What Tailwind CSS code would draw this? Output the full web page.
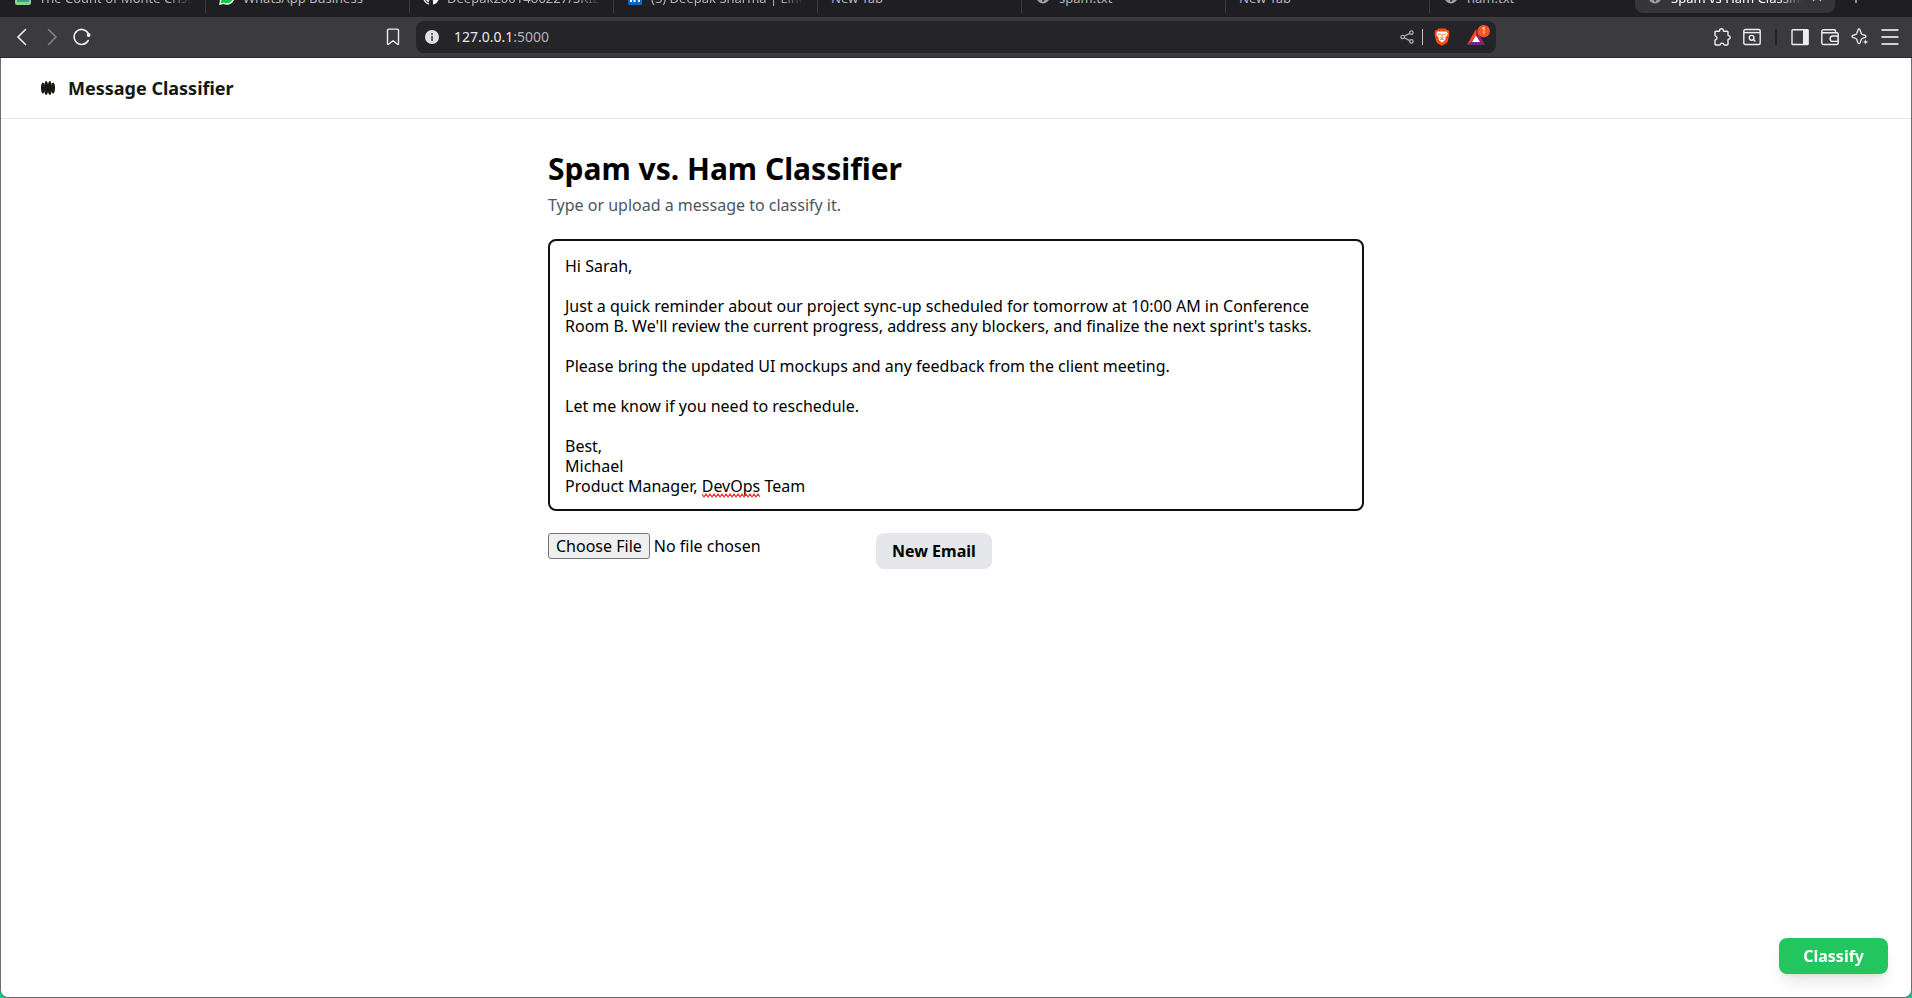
<!DOCTYPE html>
<html lang="en">
<head>
<meta charset="utf-8">
<meta name="viewport" content="width=device-width, initial-scale=1">
<title>Spam vs Ham Classifier</title>
<script src="https://cdn.jsdelivr.net/npm/@tailwindcss/browser@4"></script>
</head>
<body class="flex min-h-screen flex-col bg-black font-['Noto_Sans',sans-serif] text-black">

<!-- Tab strip: only the lower part of the tabs is visible -->
<div class="flex h-[17px] items-end overflow-hidden bg-[#1f1e23] pb-1 pl-[2px] text-[13px] text-[#b4b3b8] [&_span]:pt-[3px]" role="tablist">
  <button role="tab" class="flex h-8 w-51 shrink-0 items-center gap-2 border-r border-[#3b3a3f] px-[13px]">
    <svg class="size-4 shrink-0" viewBox="0 0 16 16"><rect width="16" height="16" rx="2" fill="#8fd18c"/><path d="M2 2h12v11H2z" fill="#25463c"/><path d="M2 12h12" stroke="#2ba88d" stroke-width="2"/></svg>
    <span class="overflow-hidden whitespace-nowrap [mask-image:linear-gradient(to_right,black_85%,transparent)]">The Count of Monte Cristo</span>
  </button>
  <button role="tab" class="flex h-8 w-51 shrink-0 items-center gap-2 border-r border-[#3b3a3f] px-[13px]">
    <svg class="size-4 shrink-0" viewBox="0 0 16 16"><path d="M0 16l1-4.200A7.800 7.800 0 1 1 4.500 15z" fill="#fff"/><path d="M1.500 14.500l.9-3A6.500 6.500 0 1 1 5 13.700z" fill="#12c843"/><path d="M5 5c0 3 3 6 6 6l1-2-2-1-1 1-2-2 1-1-1-2z" fill="#fff"/></svg>
    <span class="whitespace-nowrap">WhatsApp Business</span>
  </button>
  <button role="tab" class="flex h-8 w-51 shrink-0 items-center gap-2 border-r border-[#3b3a3f] px-[13px]">
    <svg class="size-4 shrink-0" viewBox="0 0 16 16"><path fill="#fff" d="M8 0C3.580 0 0 3.580 0 8c0 3.540 2.290 6.530 5.470 7.590.4.070.55-.17.55-.38v-1.490c-2.010.37-2.530-.49-2.690-.94-.09-.23-.48-.94-.82-1.130-.28-.15-.68-.52-.01-.53.63-.01 1.080.58 1.230.82.72 1.210 1.870.87 2.330.66.07-.52.28-.87.51-1.070-1.780-.2-3.640-.89-3.640-3.950 0-.87.31-1.590.82-2.150-.08-.2-.36-1.020.08-2.120 0 0 .67-.21 2.200.82a7.400 7.400 0 0 1 4 0c1.530-1.040 2.200-.82 2.200-.82.44 1.100.16 1.920.08 2.120.51.56.82 1.270.82 2.150 0 3.070-1.870 3.750-3.650 3.950.29.25.54.73.54 1.480v2.200c0 .21.15.46.55.38A8 8 0 0 0 16 8c0-4.420-3.580-8-8-8z"/></svg>
    <span class="overflow-hidden whitespace-nowrap [mask-image:linear-gradient(to_right,black_85%,transparent)]">Deepak20014o0227/SKIZZIT</span>
  </button>
  <button role="tab" class="flex h-8 w-51 shrink-0 items-center gap-2 border-r border-[#3b3a3f] px-[13px]">
    <svg class="size-4 shrink-0" viewBox="0 0 16 16"><rect x="1" width="14" height="16" rx="1" fill="#0a66c2"/><path d="M4 6v7M7.500 13V6M7.500 9.500c0-3 4.500-3 4.500 0V13M4 3v1.500" fill="none" stroke="#fff" stroke-width="2"/></svg>
    <span class="overflow-hidden whitespace-nowrap [mask-image:linear-gradient(to_right,black_85%,transparent)]">(3) Deepak Sharma | LinkedIn</span>
  </button>
  <button role="tab" class="flex h-8 w-51 shrink-0 items-center border-r border-[#3b3a3f] px-[13px]"><span>New Tab</span></button>
  <button role="tab" class="flex h-8 w-51 shrink-0 items-center gap-2 border-r border-[#3b3a3f] px-[13px]">
    <svg class="size-4 shrink-0" viewBox="0 0 16 16"><circle cx="8" cy="8" r="6.500" fill="#9aa0a6"/><path d="M8 3c4 0 5 2 5.500 5l-3 1-2 4-1.500-1V9L3 7.500z" fill="#29282d"/></svg>
    <span>spam.txt</span>
  </button>
  <button role="tab" class="flex h-8 w-51 shrink-0 items-center border-r border-[#3b3a3f] px-[13px]"><span>New Tab</span></button>
  <button role="tab" class="flex h-8 w-51 shrink-0 items-center gap-2 px-[13px]">
    <svg class="size-4 shrink-0" viewBox="0 0 16 16"><circle cx="8" cy="8" r="6.500" fill="#9aa0a6"/><path d="M8 3c4 0 5 2 5.500 5l-3 1-2 4-1.500-1V9L3 7.500z" fill="#29282d"/></svg>
    <span>ham.txt</span>
  </button>
  <div role="tab" aria-selected="true" class="ml-px flex h-8 w-50 shrink-0 items-center gap-2 rounded-lg bg-[#36353a] px-3 text-white">
    <svg class="size-4 shrink-0" viewBox="0 0 16 16"><circle cx="8" cy="8" r="6.500" fill="#9aa0a6"/><path d="M8 3c4 0 5 2 5.500 5l-3 1-2 4-1.500-1V9L3 7.500z" fill="#36353a"/></svg>
    <span class="w-33 overflow-hidden whitespace-nowrap [mask-image:linear-gradient(to_right,black_80%,transparent)]">Spam vs Ham Classifier</span>
    <button aria-label="Close tab"><svg class="size-3" viewBox="0 0 12 12"><path d="M2 2l8 8M10 2L2 10" stroke="#b4b3b8" stroke-width="1.200"/></svg></button>
  </div>
  <button aria-label="New tab" class="ml-[15px] flex h-8 items-center"><svg class="size-3" viewBox="0 0 12 12"><path d="M6 0v12M0 6h12" stroke="#b4b3b8" stroke-width="1.500"/></svg></button>
</div>

<!-- Toolbar -->
<div class="grid h-[41px] grid-cols-[1fr_minmax(0,1080px)_1fr] items-center border-b border-[#2e2930] bg-[#3b3a3f] text-[#eeedf2]">
  <div class="flex items-center pr-2 pl-[7px]">
    <button aria-label="Back" class="flex w-[30px] justify-center"><svg class="size-[18px]" viewBox="0 0 18 18" fill="none" stroke="currentColor" stroke-width="1.600" stroke-linecap="round"><path d="M12.500 1.500L5 9l7.500 7.500"/></svg></button>
    <button aria-label="Forward" class="flex w-[30px] justify-center text-[#85848a]"><svg class="size-[18px]" viewBox="0 0 18 18" fill="none" stroke="currentColor" stroke-width="1.500" stroke-linecap="round"><path d="M5.500 1.500L13 9l-7.500 7.500"/></svg></button>
    <button aria-label="Reload" class="flex w-[30px] justify-center"><svg class="size-[18px]" viewBox="0 0 18 18" fill="none" stroke="currentColor" stroke-width="1.600" stroke-linecap="round"><path d="M15.200 12.500A7.500 7.500 0 1 1 15.500 6"/><circle cx="15.600" cy="7" r="1.900" fill="currentColor" stroke="none"/></svg></button>
    <button aria-label="Bookmark" class="ml-auto flex w-[30px] justify-center"><svg class="size-[18px]" viewBox="0 0 18 18" fill="none" stroke="currentColor" stroke-width="1.400" stroke-linejoin="round"><path d="M3.500 2.500a1.400 1.400 0 0 1 1.400-1.400h8.200a1.400 1.400 0 0 1 1.400 1.400v13.200a.6.6 0 0 1-1 .5L9 12.800l-4.500 3.400a.6.6 0 0 1-1-.5z"/></svg></button>
  </div>
  <div class="flex h-8 items-center rounded-lg bg-[#252429] pl-[9px] pr-[6px]">
    <svg class="size-[14px] shrink-0" viewBox="0 0 14 14"><circle cx="7" cy="7" r="7" fill="#e2e1e8"/><path d="M6.100 3h1.900v1.700H6.100zM6.100 5.800h1.900V11H6.100z" fill="#5b5a60"/></svg>
    <div class="ml-[15px] flex-1 text-sm text-[#b3b2b8]" role="textbox" aria-label="Address"><span class="text-[#e8e7ec]">127.0.0.1</span>:5000</div>
    <button aria-label="Share"><svg class="size-[14px]" viewBox="0 0 16 16" fill="none" stroke="#b3b2b8" stroke-width="1.400"><circle cx="3" cy="8" r="2"/><circle cx="13" cy="3" r="2"/><circle cx="13" cy="13" r="2"/><path d="M4.800 7.200l6.400-3.300M4.800 8.800l6.400 3.300"/></svg></button>
    <div class="mx-2 h-4 w-px bg-[#c4c3c8]"></div>
    <button aria-label="Brave Shields" class="ml-[3px]"><svg class="h-[18px] w-4" viewBox="0 0 16 18"><path d="M4.500.5h7l1.300 1.500 1.500.1 1.200 1.800-.5 1.600.5 1-1.900 7.200-1 1.500L8 17.800l-4.600-2.600-1-1.500L.5 6.500l.5-1L.5 3.900l1.200-1.800L3.200 2z" fill="#fb4c0a"/><path d="M3.700 3.300l2.300.4L8 3.200l2 .5 2.300-.4 1.400 2.100-.5 1.900-2.100 2.800.4 1.700L8 14.700l-3.500-2.900.4-1.700-2.100-2.800-.5-1.900z" fill="#fff"/><path d="M4 6l2.700.7M12 6l-2.700.7M8 6v3.500M6.400 9.600L8 10.500l1.600-.9M5.900 12L8 10.900l2.100 1.100" stroke="#fb4c0a" stroke-width=".8" fill="none"/></svg></button>
    <button aria-label="Brave Rewards" class="ml-[17px]"><svg class="h-6 w-[23px]" viewBox="0 0 23 24"><path d="M9 4L9 11 4.500 17 0 20z" fill="#ff4724"/><path d="M9 4l9 16-5.500-3L9 11z" fill="#9e1f63"/><path d="M0 20l5-3.500h8L18 20z" fill="#662d91"/><path d="M9 10.500l4 6.500H5z" fill="#fff"/><circle cx="16.700" cy="6.200" r="6.200" fill="#fb542b"/><text x="16.700" y="9" text-anchor="middle" font-size="8" fill="#fff" font-family="Noto Sans">1</text></svg></button>
  </div>
  <div class="flex items-center justify-end pr-[7px]">
    <button aria-label="Extensions" class="flex w-[30px] justify-center"><svg class="size-[18px]" viewBox="0 0 18 18" fill="none" stroke="currentColor" stroke-width="1.400" stroke-linejoin="round"><path d="M2 4.200a1 1 0 0 1 1-1h3.200c.5 0 .6-.4.5-.8C6.500.2 10.500.2 10.300 2.400c0 .5.100.8.600.8h3.100a1 1 0 0 1 1 1v2.700c0 .5.300.6.700.8 2 .7 2 3 0 3.600-.4.100-.7.300-.7.800V16a1 1 0 0 1-1 1h-2.500c-.6 0-.6-.5-.8-.9-.6-1.300-2.700-1.300-3.300 0-.2.400-.2.900-.8.900H3a1 1 0 0 1-1-1v-3.500c0-.5.300-.6.700-.8 1.700-.8 1.700-2.900 0-3.600-.4-.2-.7-.4-.7-.9z"/></svg></button>
    <button aria-label="Search tabs" class="flex w-[30px] justify-center"><svg class="size-[18px]" viewBox="0 0 18 18" fill="none" stroke="currentColor" stroke-width="1.400"><rect x=".8" y="1.500" width="16.400" height="15" rx="1.500"/><path d="M1 4.600h16"/><circle cx="8.600" cy="9.800" r="2.400"/><path d="M10.400 11.600l2 2"/></svg></button>
    <div class="mx-2 h-4 w-[2px] bg-[#222126]"></div>
    <button aria-label="Sidebar" class="flex w-[30px] justify-center"><svg class="size-[18px]" viewBox="0 0 18 18"><rect x="1" y="1.700" width="16" height="14.800" rx=".8" fill="none" stroke="currentColor" stroke-width="1.400"/><path d="M12 1.500h5.500v15H12z" fill="currentColor"/></svg></button>
    <button aria-label="Wallet" class="flex w-[30px] justify-center"><svg class="size-[18px]" viewBox="0 0 18 18" fill="none" stroke="currentColor" stroke-width="1.400"><path d="M14.500 5V3a1.200 1.200 0 0 0-1.200-1.200H2.500A1.600 1.600 0 0 0 .8 3.400V15a1.500 1.500 0 0 0 1.500 1.500h13.400a1.500 1.500 0 0 0 1.500-1.500V6a1.300 1.300 0 0 0-1.300-1.300H2.300C1.400 4.700.8 4 .8 3.400M17 8h-5.200a2.700 2.700 0 0 0 0 5.400H17z"/></svg></button>
    <button aria-label="Assistant" class="flex w-[30px] justify-center"><svg class="size-[18px]" viewBox="0 0 18 18" fill="none" stroke="currentColor" stroke-width="1.300" stroke-linejoin="round"><path d="M8 1c.6 0 .8.300 1 .9l1.300 3.500c.2.500.4.700.9.900l3 1.100c1 .4 1 1.600 0 2l-3 1.100c-.5.200-.7.400-.9.900L9 14.900c-.4 1-1.600 1-2 0l-1.300-3.500c-.2-.5-.4-.7-.9-.9l-3-1.100c-1-.4-1-1.600 0-2l3-1.100c.5-.2.700-.4.900-.9L7 1.900c.2-.6.400-.9 1-.9z"/><path d="M14.500 10.500l.9 2.600 2.600.9-2.600.9-.9 2.600-.9-2.600L11 14l2.600-.9z" fill="currentColor" stroke="#3b3a3f" stroke-width=".6"/></svg></button>
    <button aria-label="Menu" class="flex w-[30px] justify-center"><svg class="size-[18px]" viewBox="0 0 18 18" stroke="#d0cfd4" stroke-width="1.800"><path d="M.5 2h17M.5 9h17M.5 16h17"/></svg></button>
  </div>
</div>

<!-- Page -->
<div class="flex flex-1 flex-col bg-[#00d084]">
  <div class="flex flex-1 flex-col rounded-b-lg border-x border-b border-[#6e6e6e] bg-white">
    <header class="flex items-center gap-[13px] border-b border-[#e5e5e5] px-10 py-4">
      <svg class="size-[14px]" viewBox="0 0 14 14" fill="#131811"><ellipse cx="1.900" cy="7" rx="1.900" ry="5.600"/><ellipse cx="5.200" cy="7" rx="2.100" ry="6.900"/><ellipse cx="8.800" cy="7" rx="2.100" ry="6.900"/><ellipse cx="12.100" cy="7" rx="1.900" ry="5.600"/></svg>
      <h2 class="text-lg font-bold text-[#131811]">Message Classifier</h2>
    </header>
    <main class="mx-auto w-full max-w-[816px] pt-8">
      <h1 class="text-3xl font-bold">Spam vs. Ham Classifier</h1>
      <label for="message" class="mt-[6px] block text-[#4b5563]">Type or upload a message to classify it.</label>
      <div class="relative mt-[22px]">
        <textarea id="message" spellcheck="false" class="block h-[272px] w-full resize-none overflow-hidden rounded-lg border-2 border-[#111] p-[15px] leading-5 outline-none">Hi Sarah,

Just a quick reminder about our project sync-up scheduled for tomorrow at 10:00 AM in Conference Room B. We'll review the current progress, address any blockers, and finalize the next sprint's tasks.

Please bring the updated UI mockups and any feedback from the client meeting.

Let me know if you need to reschedule.

Best,
Michael
Product Manager, DevOps Team</textarea>
        <!-- Spelling mark -->
        <svg class="pointer-events-none absolute top-[254px] left-[154px] h-[5px] w-[58px]" viewBox="0 0 58 5" fill="none" stroke="#ff3030" stroke-width="1.200"><path d="M0 1l2 3 2-3 2 3 2-3 2 3 2-3 2 3 2-3 2 3 2-3 2 3 2-3 2 3 2-3 2 3 2-3 2 3 2-3 2 3 2-3 2 3 2-3 2 3 2-3 2 3 2-3 2 3 2-3 2 3"/></svg>
      </div>
      <div class="mt-[22px] flex items-start gap-4">
        <input type="file" aria-label="Choose a message file" class="w-[312px] file:mr-1 file:rounded-[3px] file:border file:border-solid file:border-[#767676] file:bg-[#efefef] file:px-[7px] file:py-0">
        <button class="rounded-lg bg-gray-200 px-4 py-2 leading-5 font-bold">New Email</button>
      </div>
    </main>
    <button class="fixed right-6 bottom-6 rounded-lg bg-[#22c55e] px-6 py-2 leading-5 font-bold text-white shadow-lg">Classify</button>
  </div>
</div>
</body>
</html>
